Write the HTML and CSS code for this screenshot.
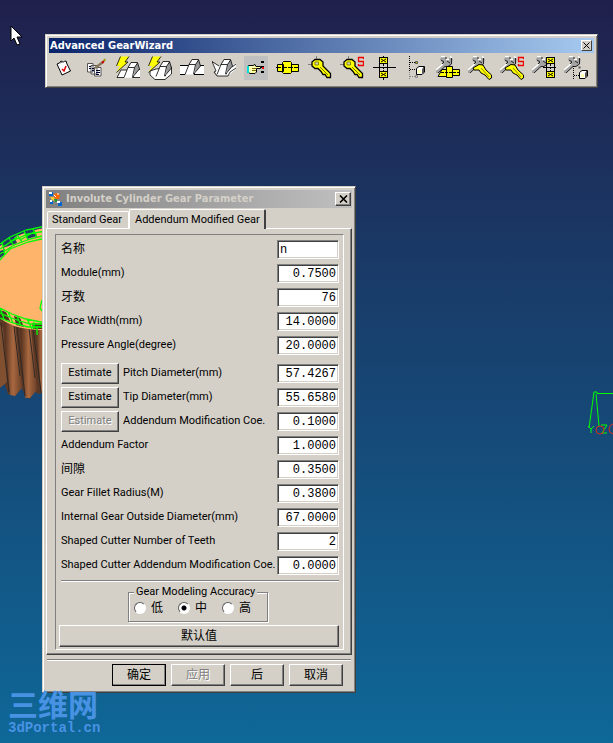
FILE: index.html
```html
<!DOCTYPE html>
<html lang="zh-CN">
<head>
<meta charset="utf-8">
<title>Advanced GearWizard</title>
<link rel="stylesheet" href="styles.css">
</head>
<body>
<main class="desktop">
  <svg class="gear" width="46" height="180" viewBox="0 0 46 180" aria-hidden="true">
    <defs>
      <linearGradient id="tooth" x1="0" x2="1" y1="0" y2="0">
        <stop offset="0" stop-color="#4c2c1c"/><stop offset=".5" stop-color="#a86840"/><stop offset="1" stop-color="#6c4028"/>
      </linearGradient>
    </defs>
    <path d="M0 90H46V168L40 174L34 172L30 179L25 176L22 168L15 176L8 174L4 162L0 168Z" fill="#5c3824"/>
    <path d="M4 100L15 105L22 168L15 176L10 175Z" fill="url(#tooth)"/>
    <path d="M20 105L31 108L37 170L30 178L25 178Z" fill="url(#tooth)"/>
    <path d="M36 108H46V168L41 172Z" fill="url(#tooth)"/>
    <path d="M0 105L3 108L7 162L0 168Z" fill="#805030"/>
    <path d="M1 103L9 172M17 107L25 176M33 108L41 172M14 106L20 156M29 108L35 158" stroke="#302824" fill="none"/>
    <path d="M0 26C12 17 28 10 46 8V110C28 110 12 108 0 98Z" fill="#ffb46c"/>
    <path d="M3 20L14 16L17 23L3 28ZM25 12L34 9L37 16L27 19ZM0 31L5 29V34L0 38Z" fill="#204060"/>
    <path d="M0 90L6 92L10 101L0 98ZM14 96L20 98L24 107L16 105ZM32 103L46 104V109H33Z" fill="#483820"/>
    <path d="M0 24L10 17L26 10L46 6M0 29L12 21L28 14L46 11M0 34L14 25L30 19L46 15M0 40L10 29L28 22L46 18M2 22L5 35M9 18L14 26M17 15L22 22M24 11L28 20M33 9L37 17M5 26L17 17M20 20L34 12M0 88L12 94L26 99L46 103M0 93L14 99L30 104H46M0 98L13 103L28 107H46M0 88L4 99M8 92L13 103M17 96L21 106M27 99L32 109M34 102V109M37 106V115M42 80L40 88L43 92" stroke="#0f0" stroke-width="1.300" fill="none"/>
  </svg>

  <svg class="axes" width="26" height="48" viewBox="0 0 26 48" fill="none" aria-hidden="true">
    <path d="M26 3.500H10V2H7L2 38M9 4L12 36" stroke="#0f0"/>
    <path d="M1 36L4 39L7 36M4 39V43M14 35H20L15 43H20" stroke="#0f0"/>
    <circle cx="13" cy="40" r="4" stroke="#d03020"/>
    <path d="M26 34Q22 35 22 39T26 44" stroke="#d03020"/>
  </svg>

  <svg class="pointer" width="14" height="22" viewBox="0 0 14 22" aria-hidden="true">
    <path d="M1 1V16L4 13L7 20L10 19L7 12H12Z" fill="#fff" stroke="#000"/>
  </svg>

  <section class="window toolbar" aria-labelledby="tb-title">
    <header class="titlebar active">
      <h1 id="tb-title">Advanced GearWizard</h1>
      <button class="close small" aria-label="Close"><svg width="7" height="7" viewBox="0 0 7 7"><path d="M.500.500L6.500 6.500M6.500.500L.500 6.500" stroke="#000"/></svg></button>
    </header>
    <svg class="symbols" aria-hidden="true">
      <defs>
        <g id="bolt"><path d="M4.500.500H13L9 6H12L.500 16.500L4 10H.500Z" fill="#ff0"/><path d="M13 .500L9 6H12L.500 16.500M4.500.500L.500 10" fill="none" stroke="#000" stroke-width=".8"/></g>
        <g id="key"><path d="M8.500 0V6M0 8.500H7" stroke="#808080"/><path d="M7 3.500H12L15 6V10L22.500 17.500V21.500H19L17 18.500H15L13 15.500L10 12.500H7L4 10V6Z" fill="#ff0" stroke="#000" stroke-width="1.300"/><path d="M7 6H10.500V9H7Z" fill="#d4d0c8" stroke="#888800"/><path d="M12 11L20 19" stroke="#777700"/></g>
        <g id="mark"><path d="M23.500 3V1.500H18.500V5.500H23.500V9.500H18.500V8" fill="none" stroke="#e00" stroke-width="1.300"/></g>
        <g id="wrench"><path d="M5 1H9L10 3H13L14 1L17 3L16 8L13 10H10L2 17H0V14L7 8L6 6L4 4Z" fill="#a4a4a4"/><path d="M5 .500H9M10 3.500H13M14 .500L16 2M7 8L0 14" stroke="#fff" stroke-width="1.400"/><path d="M10 1V3M15.500 2V8L12 10.500H9L2 17M5 4L8 6L6 8M11 5L14 7" fill="none" stroke="#222"/></g>
        <g id="boxes" shape-rendering="crispEdges"><path d="M7.500 1.500H15.500V7.500H7.500ZM7.500 15.500H15.500V21.500H7.500Z" fill="#ff0" stroke="#000"/><path d="M7.500 7V15M15.500 7V15" stroke="#000"/><path d="M11.500 8V15" stroke="#000" stroke-dasharray="2 1"/></g>
        <g id="crosses"><path d="M9 3L14 6M14 3L9 6M9 17L14 20M14 17L9 20" stroke="#000"/></g>
        <g id="cube"><path d="M12.500 12.500L15 10.500H20.500V16L18 18.500H12.500Z" fill="#fff" stroke="#000"/><path d="M18.500 12.500V18M19.500 11V17" stroke="#555"/><path d="M14 14H17V17H14Z" fill="#ffffb0"/></g>
        <g id="blade"><path d="M5 12L11 8.500L15 9L18 14L23.500 19V22L21 23.500L17 19L13 17L11 14H6Z" fill="#ff0" stroke="#000"/><path d="M13 12L21 21" stroke="#888800"/></g>
        <g id="profile"><path d="M5 18.500L9 8.500L12 4H18.500L15.500 9L13.500 18.500Z" fill="#fff"/><path d="M18.500 3.500L20.500 10L15 16L15.500 9Z" fill="#999"/><path d="M5 18.500L9 8.500L12 3.500H18.500L20.500 10L15 16.500L14 18.500M9 8.500H15.500L13.500 18M15.500 8.500L18.500 4" fill="none" stroke="#000" stroke-width=".8"/></g>
      </defs>
    </svg>
    <div class="tools" role="toolbar">
      <button aria-label="Check"><svg viewBox="0 0 24 24"><path d="M5 8L7.500 7L9 5L11 6L14 5L15 8L18.500 15L10 19Z" fill="#fff" stroke="#000"/><path d="M8 7L13 5" stroke="#777"/><path d="M10 13L12 15L14 10" fill="none" stroke="#d00" stroke-width="1.500"/></svg></button>
      <button aria-label="Edit"><svg viewBox="0 0 24 24"><path d="M3.500 7.500H9V16H3.500ZM7 9.500H13V18H7ZM10.500 11.500H17V20H10.500Z" fill="#fff" stroke="#555"/><path d="M5 10.500H7M5 12.500H7M8 12.500H10M8 14.500H10M12 14.500H16M12 16.500H16M12 18.500H15" stroke="#003"/><path d="M11 12L19 6" stroke="#887860" stroke-width="2.500"/><path d="M18 7L20 5" stroke="#c00" stroke-width="2"/><path d="M20 5L21 3" stroke="#990" stroke-width="2"/></svg></button>
      <button aria-label="Standard tooth"><svg viewBox="0 0 24 24"><path d="M1 21.500L5 14H24V21.500Z" fill="#fff"/><path d="M1 21.500H8M1 21.500L5 14H11M22 13.500H24M16 21.500H24" stroke="#000" stroke-width=".8"/><use href="#profile" x="3" y="3"/><use href="#bolt"/></svg></button>
      <button aria-label="Internal tooth"><svg viewBox="0 0 24 24"><path d="M2 15L8 13L23.500 11V18L17 23.500H7L2 19Z" fill="#fff" stroke="#000" stroke-width=".8"/><use href="#profile" x="3" y="2"/><use href="#bolt"/></svg></button>
      <button aria-label="External profile"><svg viewBox="0 0 24 24"><path d="M0 9H24V18H0Z" fill="#fff"/><path d="M0 9.500H9M20 9.500H24M0 18.500H5M14 18.500H24" stroke="#000"/><use href="#profile"/></svg></button>
      <button aria-label="Internal profile"><svg viewBox="0 0 24 24"><path d="M0 6L7 10H19L24 7V13L16 20H5L3 14Z" fill="#fff"/><path d="M0 5.500L7 10M0 5.500L4 15L2 16L5 20H16L18 16L24 12M20 11L24 8" fill="none" stroke="#000" stroke-width=".8"/><use href="#profile"/></svg></button>
      <button class="pressed" aria-label="Select"><svg viewBox="0 0 24 24"><path d="M4.500 9.500H9L11 8.500L12 10.500H16.500V12.500H12.500V16L11 17.500H6L4.500 16.500Z" fill="#ffffb0" stroke="#000"/><path d="M8 12.500H12M8 14.500H12" stroke="#776600"/><path d="M3 10H5V17H3Z" fill="#0dd"/><path d="M18.500 5V19" stroke="#000" stroke-width="3" stroke-dasharray="2 3"/><path d="M18 11H20V13H18Z" fill="#e00"/></svg></button>
      <button aria-label="Shaft"><svg viewBox="0 0 24 24"><path d="M1.500 8.500H7.500V15.500H1.500ZM15.500 8.500H22.500V15.500H15.500ZM6.500 6.500L7.500 5.500H14.500L15.500 6.500V16.500L14.500 17.500H7.500L6.500 16.500Z" fill="#ff0" stroke="#000"/><path d="M0 11.500H24" stroke="#000" stroke-dasharray="5 1"/></svg></button>
      <button aria-label="Key"><svg viewBox="0 0 24 24"><use href="#key"/></svg></button>
      <button aria-label="Standard key"><svg viewBox="0 0 24 24"><use href="#key"/><use href="#mark"/></svg></button>
      <button aria-label="Bearing"><svg viewBox="0 0 24 24"><use href="#boxes"/><use href="#crosses"/><path d="M1 11.500H24M11.500 0V2M11.500 22V24" stroke="#000"/></svg></button>
      <button aria-label="Structure"><svg viewBox="0 0 24 24"><path d="M5.500 0V16M6 6.500H11M6 13.500H12" stroke="#000" stroke-dasharray="1 1"/><path d="M5.500 16V23M6 20.500H11" stroke="#888" stroke-dasharray="1 1"/><path d="M11.500 5.500H13.500V7.500H11.500Z" fill="#cc0" stroke="#555"/><path d="M11.500 19.500H13.500V21.500H11.500Z" stroke="#888" fill="none"/><use href="#cube"/></svg></button>
      <button aria-label="Modify shaft"><svg viewBox="0 0 24 24"><use href="#wrench"/><path d="M2 20.500L6 13.500H10.500V20.500ZM16.500 13.500H23.500V19.500H16.500Z" fill="#ff0" stroke="#000"/><path d="M10.500 10.500H16.500V21.500H10.500Z" fill="#ff0" stroke="#000"/><path d="M5 16.500H24" stroke="#000" stroke-dasharray="3 1"/></svg></button>
      <button aria-label="Modify key"><svg viewBox="0 0 24 24"><use href="#wrench"/><use href="#blade"/></svg></button>
      <button aria-label="Modify standard key"><svg viewBox="0 0 24 24"><use href="#wrench"/><use href="#blade"/><use href="#mark"/></svg></button>
      <button aria-label="Modify bearing"><svg viewBox="0 0 24 24"><use href="#wrench"/><use href="#boxes" x="7"/><use href="#crosses" x="7"/><path d="M11 11.500H24" stroke="#000"/></svg></button>
      <button aria-label="Modify structure"><svg viewBox="0 0 24 24"><use href="#wrench"/><path d="M9.500 10V23M10 19.500H15" stroke="#000" stroke-dasharray="1 1"/><path d="M14.500 10.500H16.500V12.500H14.500Z" fill="#555"/><use href="#cube" x="3" y="4"/></svg></button>
    </div>
  </section>

  <form class="window dialog" aria-labelledby="dlg-title">
    <header class="titlebar">
      <svg width="16" height="16" viewBox="0 0 16 16" aria-hidden="true"><path d="M1 1H5V5H1ZM2 10H5V13H2ZM10 11H14V15H10Z" fill="#06c"/><path d="M1 1H4V3H1ZM9 10H12V12H9ZM2 9H4V11H2Z" fill="#fff"/><path d="M6 3L9 2L12 4L11 8L8 8L6 6Z" fill="#f60"/><path d="M2 6L6 6L7 10L4 9Z" fill="#fc3"/><path d="M6 8L9 8V11L7 11Z" fill="#293"/><path d="M6 4L8 6M9 3H11" stroke="#fff"/></svg>
      <h2 id="dlg-title">Involute Cylinder Gear Parameter</h2>
      <button type="button" class="close" aria-label="Close"><svg width="9" height="8" viewBox="0 0 9 8"><path d="M1 .500L8 7.500M8 .500L1 7.500" stroke="#000" stroke-width="1.600"/></svg></button>
    </header>
    <div class="tabs" role="tablist">
      <button type="button" class="tab" role="tab">Standard Gear</button>
      <button type="button" class="tab selected" role="tab" aria-selected="true">Addendum Modified Gear</button>
    </div>
    <div class="page">
      <div class="frame">
        <div class="row"><label class="cjk" for="f1">名称</label><input class="name" id="f1" value="n"></div>
        <div class="row"><label for="f2">Module(mm)</label><input id="f2" value="0.7500"></div>
        <div class="row"><label class="cjk" for="f3">牙数</label><input id="f3" value="76"></div>
        <div class="row"><label for="f4">Face Width(mm)</label><input id="f4" value="14.0000"></div>
        <div class="row"><label for="f5">Pressure Angle(degree)</label><input id="f5" value="20.0000"></div>
        <div class="row spaced"><button type="button" class="btn">Estimate</button><label for="f6">Pitch Diameter(mm)</label><input id="f6" value="57.4267"></div>
        <div class="row"><button type="button" class="btn">Estimate</button><label for="f7">Tip Diameter(mm)</label><input id="f7" value="55.6580"></div>
        <div class="row"><button type="button" class="btn" disabled>Estimate</button><label for="f8">Addendum Modification Coe.</label><input id="f8" value="0.1000"></div>
        <div class="row"><label for="f9">Addendum Factor</label><input id="f9" value="1.0000"></div>
        <div class="row"><label class="cjk" for="f10">间隙</label><input id="f10" value="0.3500"></div>
        <div class="row"><label for="f11">Gear Fillet Radius(M)</label><input id="f11" value="0.3800"></div>
        <div class="row"><label for="f12">Internal Gear Outside Diameter(mm)</label><input id="f12" value="67.0000"></div>
        <div class="row"><label for="f13">Shaped Cutter Number of Teeth</label><input id="f13" value="2"></div>
        <div class="row"><label for="f14">Shaped Cutter Addendum Modification Coe.</label><input id="f14" value="0.0000"></div>
        <hr>
        <fieldset class="accuracy">
          <legend>Gear Modeling Accuracy</legend>
          <label><input type="radio" name="accuracy">低</label>
          <label><input type="radio" name="accuracy" checked>中</label>
          <label><input type="radio" name="accuracy">高</label>
        </fieldset>
        <button type="button" class="btn default">默认值</button>
      </div>
    </div>
    <hr class="rule">
    <footer class="actions">
      <button type="button" class="btn primary">确定</button>
      <button type="button" class="btn" disabled>应用</button>
      <button type="button" class="btn">后</button>
      <button type="button" class="btn">取消</button>
    </footer>
  </form>

  <div class="brand"><span class="brand-name">三维网</span><span class="brand-site">3dPortal.cn</span></div>
</main>
</body>
</html>
```
FILE: styles.css
```css
* { box-sizing: border-box; }

body { margin: 0; }

.desktop {
  position: relative;
  min-height: 100vh;
  overflow: hidden;
  background: linear-gradient(#20204c, #0e6898);
  font: 11px/14px Roboto, "Noto Sans CJK SC", sans-serif;
  color: #000;
}

button, input { font: inherit; color: inherit; margin: 0; border-radius: 0; }
button { padding: 0; background: #d4d0c8; }
h1, h2 {
  flex: 1;
  margin: 0;
  font: 700 11px/16px "DejaVu Sans Condensed", sans-serif;
  white-space: nowrap;
}

.gear { position: absolute; left: 0; top: 220px; }
.axes { position: absolute; right: 0; top: 390px; }
.pointer { position: absolute; left: 10px; top: 25px; z-index: 3; }

.window {
  position: absolute;
  background: #d4d0c8;
  border: 1px solid;
  border-color: #d4d0c8 #404040 #404040 #d4d0c8;
  box-shadow: inset 1px 1px #fff, inset -1px -1px #808080;
}

.toolbar { left: 45px; right: 15px; top: 34px; padding: 3px 3px 7px; }
.dialog { left: 42px; top: 186px; width: 314px; padding: 3px 3px 6px; }

.titlebar {
  display: flex;
  align-items: center;
  gap: 2px;
  height: 18px;
  padding: 0 1px 0 2px;
  background: linear-gradient(90deg, #808080, #c0c0c0);
  color: #d4d0c8;
}
.titlebar.active {
  height: 15px;
  padding: 0 2px 0 1px;
  background: linear-gradient(90deg, #0a246a, #a6caf0);
  color: #fff;
}

.close {
  display: grid;
  place-items: center;
  width: 16px;
  height: 14px;
  border: 1px solid;
  border-color: #fff #404040 #404040 #fff;
  box-shadow: inset -1px -1px #808080;
}
.close.small { width: 11px; height: 11px; box-shadow: none; }

.symbols { display: none; }
.tools { display: flex; gap: 8px; padding: 3px 3px 0; }
.tools button { width: 24px; height: 24px; border: 0; }
.tools .pressed { background: #c0c0c0; }
.tools svg { display: block; width: 24px; height: 24px; fill: none; }

.tabs { display: flex; align-items: flex-end; height: 19px; margin: 1px 0 0 1px; }
.tab {
  height: 17px;
  padding: 0 6px 0 4px;
  border: 1px solid #fff;
  border-bottom: 0;
  border-radius: 2px 2px 0 0;
  white-space: nowrap;
}
.tab.selected {
  position: relative;
  height: 20px;
  padding: 0 4px 0 5px;
  border-right: 2px solid #404040;
  margin-bottom: -1px;
}

.page {
  padding: 5px 7px 4px 8px;
  border: 1px solid;
  border-color: #fff #404040 #404040 #fff;
  box-shadow: inset -1px -1px #808080;
}
.frame {
  padding: 2px 4px 2px 3px;
  border: 1px solid #808080;
  border-color: #808080 #fff #fff #808080;
}

.row { display: flex; align-items: center; gap: 4px; height: 24px; padding-left: 2px; }
.row.spaced { margin-top: 4px; }
.row label { flex: 1; min-width: 0; white-space: nowrap; }
.row .btn { width: 58px; height: 21px; }
.row .cjk { font-size: 12px; }
.row input {
  width: 62px;
  height: 19px;
  padding: 1px 2px 0;
  border: 1px solid;
  border-color: #808080 #fff #fff #808080;
  box-shadow: inset 1px 1px #404040, inset -1px -1px #d4d0c8;
  background: #fff;
  font: 12px/16px "Liberation Mono", monospace;
  text-align: right;
}
.row .name { text-align: left; }

.btn {
  height: 22px;
  border: 1px solid;
  border-color: #fff #404040 #404040 #fff;
  box-shadow: inset -1px -1px #808080;
}
.btn:disabled { color: #808080; text-shadow: 1px 1px #fff; }

hr {
  height: 2px;
  margin: 3px 0 4px 2px;
  border: 0;
  border-top: 1px solid #808080;
  border-bottom: 1px solid #fff;
}

.accuracy {
  display: flex;
  gap: 15px;
  width: 140px;
  margin: 0 auto 3px 69px;
  padding: 3px 6px 6px 5px;
  border: 1px solid #808080;
  box-shadow: 1px 1px #fff, inset 1px 1px #fff;
  font-size: 12px;
}
.accuracy legend { padding: 0 2px; font-size: 11px; line-height: 12px; white-space: nowrap; background: #d4d0c8; }
.accuracy label { display: flex; align-items: center; gap: 5px; }
.accuracy input {
  appearance: none;
  width: 12px;
  height: 12px;
  border: 1px solid;
  border-color: #606060 #fff #fff #606060;
  border-radius: 50%;
  background: #fff;
}
.accuracy input:checked { background: radial-gradient(circle, #000 0 2px, #fff 3px); }

.default { display: block; width: 100%; font-size: 12px; }

.rule { margin: 4px 1px 3px; }
.actions { display: flex; justify-content: flex-end; gap: 5px; padding-right: 9px; }
.actions .btn { width: 54px; font-size: 12px; }
.actions .primary { outline: 1px solid #000; outline-offset: -1px; }

.brand { position: absolute; left: 8px; bottom: 7px; display: grid; gap: 2px; color: #4892e4; }
.brand-name { font: 700 30px/30px "Noto Sans CJK SC", sans-serif; }
.brand-site { font: 700 14px/16px "Liberation Mono", monospace; }
```
